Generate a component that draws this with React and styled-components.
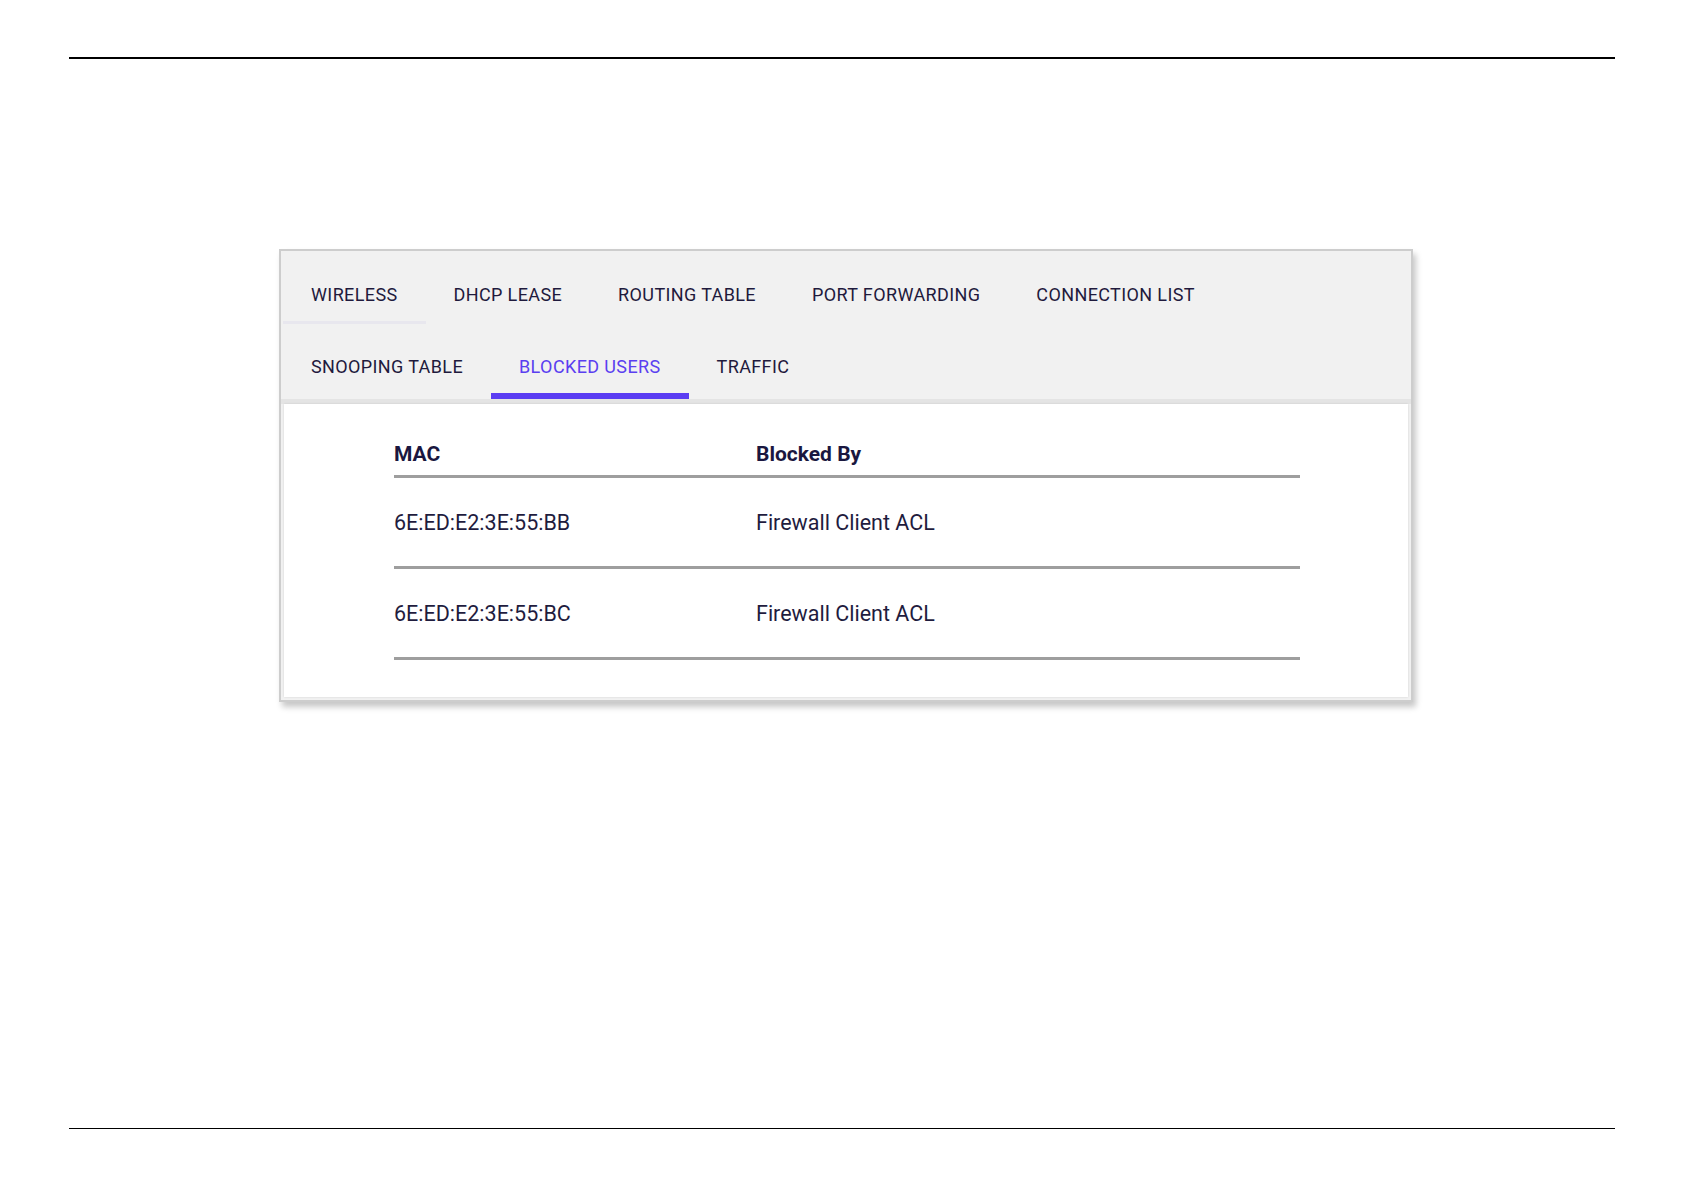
import styled, { createGlobalStyle } from "styled-components";

const GlobalStyle = createGlobalStyle`
  html, body {
    margin: 0;
    padding: 0;
    background: #ffffff;
  }
  body {
    font-family: Roboto, "Liberation Sans", Arial, sans-serif;
    color: #1d1a3c;
  }
`;

const tabRows = [
  ["WIRELESS", "DHCP LEASE", "ROUTING TABLE", "PORT FORWARDING", "CONNECTION LIST"],
  ["SNOOPING TABLE", "BLOCKED USERS", "TRAFFIC"],
];

const ACTIVE = "BLOCKED USERS";
const GHOST = "WIRELESS";

const blocked = [
  { mac: "6E:ED:E2:3E:55:BB", by: "Firewall Client ACL" },
  { mac: "6E:ED:E2:3E:55:BC", by: "Firewall Client ACL" },
];

function App() {
  return (
    <Page>
      <GlobalStyle />
      <Rule $top />
      <Panel>
        <Tabs>
          {tabRows.map((row, i) => (
            <TabRow key={i}>
              {row.map((label) => (
                <Tab
                  key={label}
                  $active={label === ACTIVE}
                  $ghost={label === GHOST}
                >
                  {label}
                </Tab>
              ))}
            </TabRow>
          ))}
        </Tabs>
        <Card>
          <Table>
            <thead>
              <tr>
                <HeadCell $first>MAC</HeadCell>
                <HeadCell>Blocked By</HeadCell>
              </tr>
            </thead>
            <tbody>
              {blocked.map(({ mac, by }) => (
                <tr key={mac}>
                  <Cell $first>{mac}</Cell>
                  <Cell>{by}</Cell>
                </tr>
              ))}
            </tbody>
          </Table>
        </Card>
      </Panel>
      <Rule />
    </Page>
  );
}

const Page = styled.div`
  width: 1684px;
  height: 1191px;
  box-sizing: border-box;
  padding-top: 57px;
  display: flex;
  flex-direction: column;
`;

const Rule = styled.div`
  margin: 0 69px;
  height: 1.5px;
  background: #000;
  margin-top: ${(props) => (props.$top ? "0" : "auto")};
  margin-bottom: ${(props) => (props.$top ? "0" : "62px")};
`;

const Panel = styled.section`
  margin: 190px 0 0 279px;
  width: 1134px;
  box-sizing: border-box;
  background: #f1f1f1;
  border: 2px solid #cdcdcd;
  box-shadow: 3px 5px 6px rgba(0, 0, 0, 0.22);
  padding: 0 3px 3px 2px;
  display: flex;
  flex-direction: column;
`;

const Tabs = styled.div`
  padding-top: 4px;
  border-bottom: 5px solid #e4e4e4;
  margin: 0 -3px 0 -2px;
  padding-left: 2px;
`;

const TabRow = styled.div`
  display: flex;
`;

const Tab = styled.div`
  position: relative;
  height: 72px;
  padding: 7px 28px 0;
  box-sizing: border-box;
  display: flex;
  align-items: center;
  font-size: 18px;
  letter-spacing: 0.38px;
  font-weight: 400;
  color: ${(props) => (props.$active ? "#5b3ff0" : "#1f1a3d")};
  cursor: pointer;

  &::after {
    content: "";
    position: absolute;
    left: 0;
    right: 0;
    height: ${(props) => (props.$active ? "6px" : "3px")};
    background: ${(props) =>
      props.$active ? "#5a3cf2" : props.$ghost ? "#e8e7ee" : "transparent"};
    bottom: ${(props) => (props.$ghost ? "3px" : "0")};
  }
`;

const Card = styled.div`
  background: #ffffff;
  margin-left: 1px;
  box-shadow: 0 0 2px rgba(0, 0, 0, 0.12);
  padding: 26px 108px 37px 110px;
`;

const Table = styled.table`
  width: 100%;
  border-collapse: collapse;
`;

const HeadCell = styled.th`
  text-align: left;
  font-size: 21px;
  font-weight: 700;
  color: #1a1740;
  height: 41px;
  padding: 4px 0 0;
  vertical-align: middle;
  width: ${(props) => (props.$first ? "362px" : "auto")};
  border-bottom: 3px solid #9e9e9e;
`;

const Cell = styled.td`
  font-size: 21.5px;
  font-weight: 400;
  color: #1f1c3e;
  height: 86px;
  padding: 2px 0 0;
  vertical-align: middle;
  border-bottom: 3px solid #9e9e9e;
`;

export default App;
